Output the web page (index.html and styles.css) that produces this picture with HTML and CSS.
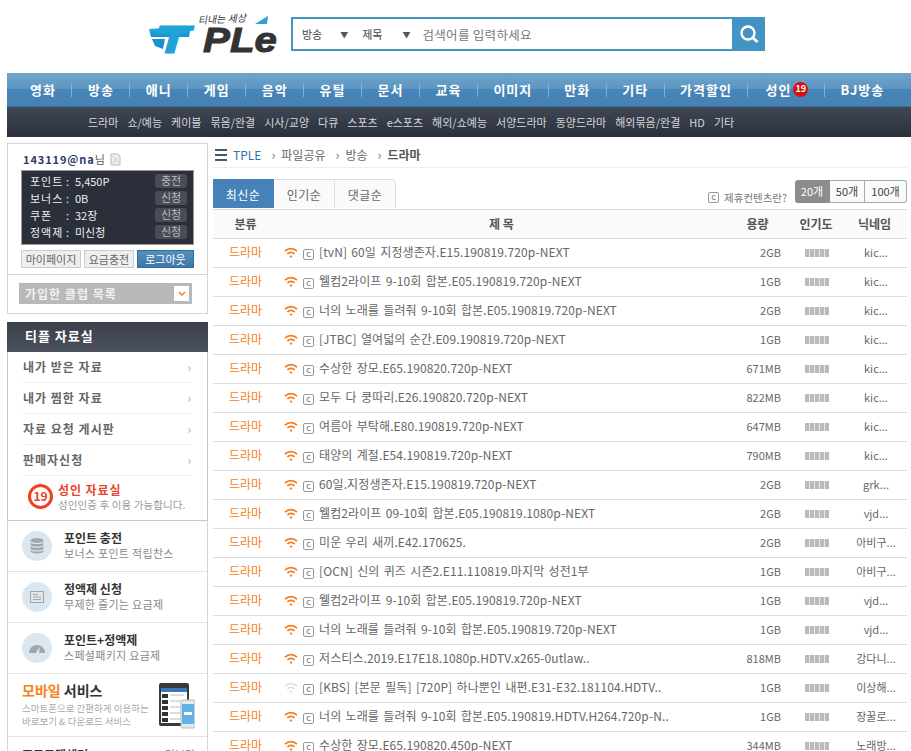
FILE: index.html
```html
<!DOCTYPE html>
<html>
  <head>
    <title>TPLE</title>
    <meta charset="utf-8">
    <link rel="stylesheet" href="styles.css">
  </head>
  <body>
    <svg class="defs" width="0" height="0">
      <symbol id="wifi" viewBox="0 0 14 12">
        <path d="M1 4.2C4.5 .8 9.5 .8 13 4.2" fill="none" stroke="currentColor" stroke-width="1.8"/>
        <path d="M3.4 6.9C5.5 4.9 8.5 4.9 10.6 6.9" fill="none" stroke="currentColor" stroke-width="1.8"/>
        <path d="M5.5 9.2C6.4 8.4 7.600 8.400 8.5 9.2L7 11z" fill="currentColor"/>
      </symbol>
    </svg>

    <header class="top">
      <svg class="logo" width="132" height="42" viewBox="0 0 132 42">
        <defs>
          <linearGradient id="logoBlue" x1="0" y1="0" x2="0" y2="1">
            <stop offset="0" stop-color="#2bb4e4"/>
            <stop offset="1" stop-color="#1593cc"/>
          </linearGradient>
        </defs>
        <text class="logo-tag" x="50" y="9" transform="rotate(-3 50 9)">티내는 세상</text>
        <polygon points="107,9 120,1 119,9" fill="#2f9fd8"/>
        <polygon points="1,14 43,11 41,22 3,22" fill="url(#logoBlue)"/>
        <polygon points="4,24 17,24 15,34 7,31" fill="#1593cc"/>
        <text class="logo-t" transform="translate(7 38) scale(1.5 1)">T</text>
        <text class="logo-ple" transform="translate(55 37) scale(1.12 1)">PLe</text>
      </svg>
      <form class="search">
        <span class="search-sel sel-a">방송</span>
        <span class="search-arrow">▼</span>
        <span class="search-sel sel-b">제목</span>
        <span class="search-arrow arrow-b">▼</span>
        <span class="search-hint">검색어를 입력하세요</span>
        <button type="button" class="search-btn">
          <svg width="20" height="20" viewBox="0 0 20 20">
            <circle cx="9" cy="9" r="6.5" fill="none" stroke="#fff" stroke-width="2.4"/>
            <path d="M13.5 13.5L18.5 18" stroke="#fff" stroke-width="3"/>
          </svg>
        </button>
      </form>
    </header>

    <nav class="main-nav">
      <a class="first">영화</a>
      <a>방송</a>
      <a>애니</a>
      <a>게임</a>
      <a>음악</a>
      <a>유틸</a>
      <a>문서</a>
      <a>교육</a>
      <a>이미지</a>
      <a>만화</a>
      <a>기타</a>
      <a>가격할인</a>
      <a class="adult">성인<span class="badge19">19</span></a>
      <a class="last">BJ방송</a>
    </nav>
    <nav class="sub-nav">
      <a>드라마</a>
      <a>쇼/예능</a>
      <a>케이블</a>
      <a>묶음/완결</a>
      <a>시사/교양</a>
      <a>다큐</a>
      <a>스포츠</a>
      <a>e스포츠</a>
      <a>해외/쇼예능</a>
      <a>서양드라마</a>
      <a>동양드라마</a>
      <a>해외묶음/완결</a>
      <a>HD</a>
      <a>기타</a>
    </nav>

    <div class="page">
      <aside class="side">
        <div class="login-box">
          <div class="user"><b>143119@na</b>님
            <svg width="11" height="13" viewBox="0 0 11 13">
              <path d="M1 1H8L10 3V12H1z" fill="#eee" stroke="#bbb"/>
              <path d="M3 3L8 10M8 4L3 10" stroke="#ccc"/>
            </svg>
          </div>
          <div class="points">
            <div class="point-row"><span class="point-label">포인트</span><span class="point-colon">:</span><span class="point-value">5,450P</span><a class="point-btn">충전</a></div>
            <div class="point-row"><span class="point-label">보너스</span><span class="point-colon">:</span><span class="point-value">0B</span><a class="point-btn">신청</a></div>
            <div class="point-row"><span class="point-label">쿠폰</span><span class="point-colon">:</span><span class="point-value">32장</span><a class="point-btn">신청</a></div>
            <div class="point-row"><span class="point-label">정액제</span><span class="point-colon">:</span><span class="point-value">미신청</span><a class="point-btn">신청</a></div>
          </div>
          <div class="login-btns">
            <a class="login-btn mypage">마이페이지</a>
            <a class="login-btn charge">요금충전</a>
            <a class="login-btn logout">로그아웃</a>
          </div>
        </div>
        <div class="club-box">
          <div class="club-select">가입한 클럽 목록<span class="club-arrow">
            <svg width="8" height="5" viewBox="0 0 8 5"><path d="M1 1L4 4L7 1" fill="none" stroke="#f08a1d" stroke-width="1.5"/></svg>
          </span></div>
        </div>

        <div class="menu-head">티플 자료실</div>
        <div class="menu-box">
          <a class="menu-item">내가 받은 자료<span class="menu-arrow">›</span></a>
          <a class="menu-item">내가 찜한 자료<span class="menu-arrow">›</span></a>
          <a class="menu-item">자료 요청 게시판<span class="menu-arrow">›</span></a>
          <a class="menu-item">판매자신청<span class="menu-arrow">›</span></a>
          <div class="adult-item">
            <span class="adult-mark">19</span>
            <div>
              <div class="adult-title">성인 자료실</div>
              <div class="adult-desc">성인인증 후 이용 가능합니다.</div>
            </div>
          </div>
        </div>

        <div class="service-box">
          <a class="service">
            <span class="service-icon">
              <svg width="14" height="16" viewBox="0 0 14 16" fill="#a3a6a8">
                <ellipse cx="7" cy="2.5" rx="6.5" ry="2.5"/>
                <path d="M.5 4.5C2 6.5 12 6.5 13.5 4.5V7C12 9 2 9 .5 7z"/>
                <path d="M.5 8.2C2 10.2 12 10.2 13.5 8.2V10.7C12 12.7 2 12.7 .5 10.7z"/>
                <path d="M.5 11.9C2 13.9 12 13.9 13.5 11.9V13.5C12 16 2 16 .5 13.5z"/>
              </svg>
            </span>
            <span class="service-text"><b class="service-title">포인트 충전</b><span class="service-desc">보너스 포인트 적립찬스</span></span>
          </a>
          <a class="service">
            <span class="service-icon">
              <svg width="14" height="12" viewBox="0 0 14 12">
                <rect x=".5" y=".5" width="13" height="11" fill="#e3e6e8" stroke="#a3a6a8"/>
                <path d="M3 3.5H8M3 6H11M3 8.5H11" stroke="#a3a6a8"/>
              </svg>
            </span>
            <span class="service-text"><b class="service-title">정액제 신청</b><span class="service-desc">무제한 즐기는 요금제</span></span>
          </a>
          <a class="service">
            <span class="service-icon">
              <svg width="16" height="10" viewBox="0 0 16 10">
                <path d="M0 10A8 8 0 0 1 16 10H10L11 4L7.5 8.5L7 10z" fill="#a3a6a8"/>
              </svg>
            </span>
            <span class="service-text"><b class="service-title">포인트+정액제</b><span class="service-desc">스페셜패키지 요금제</span></span>
          </a>
          <div class="mobile">
            <div>
              <div class="mobile-title"><span class="mobile-orange">모바일</span> 서비스</div>
              <div class="mobile-desc">스마트폰으로 간편하게 이용하는<br>바로보기 &amp; 다운로드 서비스</div>
            </div>
            <svg class="mobile-pic" width="36" height="46" viewBox="0 0 36 46">
              <rect x="0" y="0" width="30" height="43" rx="2" fill="#3a3a3a"/>
              <rect x="2" y="5" width="26" height="35" fill="#fff"/>
              <rect x="2" y="5" width="26" height="4" fill="#3b78b8"/>
              <path d="M3 11h6v4H3zM3 17h6v4H3zM3 23h6v4H3zM3 29h6v4H3zM3 35h6v4H3z" fill="#333"/>
              <path d="M11 12h14M11 18h14M11 24h14M11 30h14M11 36h14" stroke="#bbb"/>
              <rect x="22" y="17" width="14" height="28" rx="2" fill="#e8e8e8" stroke="#bbb"/>
              <rect x="23" y="21" width="12" height="20" fill="#5fb4e4"/>
              <rect x="25" y="29" width="8" height="3" fill="#fff"/>
            </svg>
          </div>
          <div class="more-row"><b>프로그램셀러</b><span>더보기</span></div>
        </div>
      </aside>

      <main class="content">
        <div class="crumbs">
          <span class="crumb-menu"></span>
          <a class="crumb-home">TPLE</a>
          <span class="crumb-sep">›</span><a>파일공유</a>
          <span class="crumb-sep">›</span><a>방송</a>
          <span class="crumb-sep">›</span><b>드라마</b>
        </div>

        <div class="toolbar">
          <div class="tabs">
            <a class="tab tab-on">최신순</a>
            <a class="tab">인기순</a>
            <a class="tab">댓글순</a>
          </div>
          <div class="tool-right">
            <a class="partner"><span class="c-mark">c</span>제휴컨텐츠란?</a>
            <div class="counts">
              <a class="count count-on">20개</a>
              <a class="count">50개</a>
              <a class="count">100개</a>
            </div>
          </div>
        </div>

        <table class="list">
          <thead>
            <tr>
              <th class="col-cat">분류</th>
              <th class="col-title">제 목</th>
              <th class="col-size">용량</th>
              <th class="col-pop">인기도</th>
              <th class="col-nick">닉네임</th>
            </tr>
          </thead>
          <tbody id="rows"></tbody>
        </table>
      </main>
    </div>

    <script>
      const rows = [
        ["[tvN] 60일 지정생존자.E15.190819.720p-NEXT", "2GB", "kic..."],
        ["웰컴2라이프 9-10회 합본.E05.190819.720p-NEXT", "1GB", "kic..."],
        ["너의 노래를 들려줘 9-10회 합본.E05.190819.720p-NEXT", "2GB", "kic..."],
        ["[JTBC] 열여덟의 순간.E09.190819.720p-NEXT", "1GB", "kic..."],
        ["수상한 장모.E65.190820.720p-NEXT", "671MB", "kic..."],
        ["모두 다 쿵따리.E26.190820.720p-NEXT", "822MB", "kic..."],
        ["여름아 부탁해.E80.190819.720p-NEXT", "647MB", "kic..."],
        ["태양의 계절.E54.190819.720p-NEXT", "790MB", "kic..."],
        ["60일.지정생존자.E15.190819.720p-NEXT", "2GB", "grk..."],
        ["웰컴2라이프 09-10회 합본.E05.190819.1080p-NEXT", "2GB", "vjd..."],
        ["미운 우리 새끼.E42.170625.", "2GB", "아비구..."],
        ["[OCN] 신의 퀴즈 시즌2.E11.110819.마지막 성전1부", "1GB", "아비구..."],
        ["웰컴2라이프 9-10회 합본.E05.190819.720p-NEXT", "1GB", "vjd..."],
        ["너의 노래를 들려줘 9-10회 합본.E05.190819.720p-NEXT", "1GB", "vjd..."],
        ["저스티스.2019.E17E18.1080p.HDTV.x265-0utlaw..", "818MB", "강다니..."],
        ["[KBS] [본문 필독] [720P] 하나뿐인 내편.E31-E32.181104.HDTV..", "1GB", "이상해...", true],
        ["너의 노래를 들려줘 9-10회 합본.E05.190819.HDTV.H264.720p-N..", "1GB", "장꿀로..."],
        ["수상한 장모.E65.190820.450p-NEXT", "344MB", "노래방..."]
      ];

      const tbody = document.getElementById("rows");
      rows.forEach(function (row) {
        const tr = document.createElement("tr");
        const wifiClass = row[3] ? "wifi wifi-off" : "wifi";
        tr.innerHTML =
          '<td class="col-cat cat-link">드라마</td>' +
          '<td class="col-title"><svg class="' + wifiClass + '" width="14" height="12"><use href="#wifi"/></svg>' +
          '<span class="c-mark">c</span>' + row[0] + "</td>" +
          '<td class="col-size">' + row[1] + "</td>" +
          '<td class="col-pop"><span class="pop-bar"></span></td>' +
          '<td class="col-nick">' + row[2] + "</td>";
        tbody.appendChild(tr);
      });
    </script>
  </body>
</html>
```

FILE: styles.css
```css
html,
body {
  height: 751px;
  overflow: hidden;
}

body {
  margin: 0;
  background-color: #fff;
  font-family: "Noto Sans CJK KR", "Noto Sans", sans-serif;
  font-size: 12px;
  color: #555;
}

a {
  color: inherit;
  text-decoration: none;
}

.defs {
  display: block;
  height: 0;
}

/* top */
.top {
  height: 73px;
  display: flex;
  padding: 15px 0 0 148px;
  box-sizing: border-box;
}

.logo {
  flex: none;
  overflow: visible;
}

.logo-tag {
  font-size: 10px;
  font-style: italic;
  fill: #333;
}

.logo-t {
  font-family: "Liberation Sans", sans-serif;
  font-size: 38px;
  font-weight: bold;
  font-style: italic;
  fill: #1ea2d8;
  stroke: #1ea2d8;
  stroke-width: 1px;
}

.logo-ple {
  font-family: "Liberation Sans", sans-serif;
  font-size: 36px;
  font-weight: bold;
  font-style: italic;
  fill: #333;
  stroke: #333;
  stroke-width: 1px;
}

.search {
  margin: 2px 0 0 11px;
  width: 474px;
  height: 34px;
  box-sizing: border-box;
  border: 2px solid #4393c3;
  display: flex;
  align-items: center;
  position: relative;
  color: #444;
  font-size: 11px;
}

.sel-a {
  margin-left: 9px;
}

.sel-b {
  margin-left: 14px;
}

.search-arrow {
  font-size: 8px;
  color: #555;
  margin-left: 18px;
}

.arrow-b {
  margin-left: 20px;
}

.search-hint {
  margin-left: 12px;
  font-size: 12.5px;
  letter-spacing: .3px;
  color: #777;
}

.search-btn {
  position: absolute;
  right: -2px;
  top: -2px;
  width: 33px;
  height: 34px;
  padding: 0;
  border: none;
  background-color: #4393c3;
  display: flex;
  align-items: center;
  justify-content: center;
}

/* nav */
.main-nav {
  margin-left: 7px;
  height: 34px;
  display: flex;
  align-items: center;
  box-sizing: border-box;
  border-bottom: 1px solid #2f6f9f;
  background: linear-gradient(#6fa5ca 0, #5c95c0 50%, #4784b7 50%, #4682b4 100%);
}

.main-nav a {
  padding: 0 15.5px;
  height: 14px;
  line-height: 14px;
  display: flex;
  align-items: center;
  border-right: 1px solid #86b0cf;
  font-size: 13px;
  font-weight: bold;
  letter-spacing: 1px;
  color: #fff;
}

.main-nav .first {
  padding-left: 23px;
}

.main-nav .adult {
  padding: 0 16px 0 17px;
}

.main-nav .last {
  border-right: none;
  padding-left: 15px;
}

.badge19 {
  width: 15px;
  height: 15px;
  margin-left: 2px;
  border-radius: 50%;
  background-color: #d90f0f;
  font-size: 9px;
  letter-spacing: 0;
  text-align: center;
}

.sub-nav {
  margin-left: 7px;
  height: 30px;
  padding-left: 81px;
  display: flex;
  align-items: center;
  gap: 9px;
  background: linear-gradient(#404755, #2a2f3a);
  font-size: 11px;
  color: #d5d7da;
}

/* layout */
.page {
  display: flex;
  padding: 6px 4px 0 7px;
}

.side {
  width: 201px;
  flex: none;
}

.content {
  width: 694px;
  margin-left: 5px;
}

/* login */
.login-box {
  height: 132px;
  box-sizing: border-box;
  border: 1px solid #d5d5d5;
  padding: 0 13px;
}

.user {
  height: 26px;
  box-sizing: border-box;
  display: flex;
  align-items: center;
  padding: 4px 2px 0;
  font-size: 11px;
  color: #555;
}

.user b {
  color: #2b3a67;
  letter-spacing: .9px;
}

.user svg {
  margin-left: 5px;
}

.points {
  height: 75px;
  box-sizing: border-box;
  border: 1px solid #999;
  background-color: #2a2f3a;
  padding: 1px 6px 0 8px;
  color: #eee;
  font-size: 11px;
}

.point-row {
  height: 17px;
  display: flex;
  align-items: center;
}

.point-label {
  width: 36px;
  letter-spacing: 1px;
}

.point-colon {
  width: 9px;
}

.point-value {
  flex: 1;
}

.point-btn {
  width: 32px;
  height: 14px;
  line-height: 13px;
  border-radius: 3px;
  background-color: #474c57;
  color: #bbb;
  text-align: center;
}

.login-btns {
  display: flex;
  gap: 3px;
  margin-top: 5px;
  font-size: 11px;
}

.login-btn {
  height: 18px;
  line-height: 16px;
  box-sizing: border-box;
  border: 1px solid #ccc;
  background-color: #eee;
  color: #666;
  text-align: center;
}

.mypage {
  width: 60px;
}

.charge {
  width: 50px;
}

.logout {
  width: 57px;
  border-color: #2f6f9f;
  background: linear-gradient(#5590bd, #3f78a8);
  color: #fff;
}

.club-box {
  height: 39px;
  box-sizing: border-box;
  padding: 8px 15px 0 11px;
  border: 1px solid #d5d5d5;
  border-top: none;
}

.club-select {
  height: 21px;
  display: flex;
  align-items: center;
  justify-content: space-between;
  padding: 0 3px 0 6px;
  background-color: #b9b9b9;
  font-weight: bold;
  font-size: 12px;
  color: #f0f0f0;
  letter-spacing: 1px;
}

.club-arrow {
  width: 15px;
  height: 15px;
  display: flex;
  align-items: center;
  justify-content: center;
  background-color: #fff;
}

/* side menu */
.menu-head {
  margin-top: 8px;
  height: 30px;
  line-height: 28px;
  padding-left: 18px;
  background: linear-gradient(#3a404c, #4b515c);
  color: #fff;
  font-size: 13px;
  font-weight: bold;
  letter-spacing: 1px;
}

.menu-box {
  border: 1px solid #c8c8c8;
  border-top: none;
  padding: 0 15px;
}

.menu-item {
  height: 31px;
  box-sizing: border-box;
  display: flex;
  align-items: center;
  justify-content: space-between;
  padding-bottom: 2px;
  border-bottom: 1px solid #eee;
  font-size: 12px;
  font-weight: bold;
  color: #666;
  letter-spacing: 1px;
}

.menu-arrow {
  font-weight: normal;
  font-size: 12px;
  color: #aaa;
}

.adult-item {
  height: 44px;
  box-sizing: border-box;
  display: flex;
  gap: 5px;
  padding: 8px 0 0 5px;
}

.adult-mark {
  width: 25px;
  height: 25px;
  flex: none;
  box-sizing: border-box;
  border: 3px solid #f0401f;
  border-radius: 50%;
  color: #f0401f;
  font-size: 12px;
  font-weight: bold;
  line-height: 18px;
  text-align: center;
}

.adult-title {
  color: #e8452c;
  font-size: 12px;
  font-weight: bold;
  line-height: 15px;
  letter-spacing: .9px;
  margin-top: -2px;
}

.adult-desc {
  font-size: 10.5px;
  line-height: 15px;
  letter-spacing: .1px;
  color: #999;
  white-space: nowrap;
}

/* service links */
.service-box {
  border: 1px solid #d5d5d5;
  border-top: none;
}

.service {
  height: 51px;
  box-sizing: border-box;
  display: flex;
  align-items: center;
  gap: 12px;
  padding: 0 0 0 14px;
  border-bottom: 1px solid #e2e2e2;
}

.service-icon {
  width: 30px;
  height: 30px;
  flex: none;
  border-radius: 50%;
  background-color: #dae6f0;
  display: flex;
  align-items: center;
  justify-content: center;
}

.service-text {
  margin-top: -3px;
}

.service-title {
  display: block;
  font-size: 12px;
  line-height: 17px;
  color: #333;
}

.service-desc {
  display: block;
  font-size: 11px;
  line-height: 15px;
  color: #888;
  letter-spacing: .3px;
}

.mobile {
  height: 63px;
  box-sizing: border-box;
  display: flex;
  justify-content: space-between;
  padding: 6px 12px 0 14px;
  border-bottom: 1px solid #e2e2e2;
}

.mobile-title {
  font-size: 14px;
  line-height: 20px;
  font-weight: bold;
  color: #333;
}

.mobile-orange {
  color: #f58220;
}

.mobile-desc {
  margin-top: 2px;
  font-size: 9.5px;
  line-height: 13px;
  color: #aaa;
  white-space: nowrap;
}

.mobile-pic {
  flex: none;
  margin-top: 3px;
}

.more-row {
  display: flex;
  justify-content: space-between;
  padding: 9px 12px 0 14px;
  font-size: 12px;
  color: #333;
}

.more-row span {
  font-size: 11px;
  color: #777;
}

/* breadcrumb */
.crumbs {
  height: 25px;
  box-sizing: border-box;
  display: flex;
  align-items: center;
  padding: 0 0 1px 2px;
  border-bottom: 1px solid #eee;
  color: #666;
  font-size: 12px;
}

.crumbs b {
  color: #555;
}

.crumb-menu {
  width: 12px;
  height: 12px;
  margin-right: 6px;
  background-image: repeating-linear-gradient(#46586b 0, #46586b 2px, #fff 2px, #fff 5px);
}

.crumb-home {
  color: #2e75ad;
}

.crumb-sep {
  margin: 0 6px 0 10px;
  font-size: 13px;
  color: #6a8297;
  line-height: 14px;
}

/* tabs */
.toolbar {
  margin-top: 11px;
  height: 30px;
  box-sizing: border-box;
  display: flex;
  justify-content: space-between;
}

.tabs {
  display: flex;
}

.tab {
  width: 61px;
  height: 29px;
  line-height: 30px;
  box-sizing: border-box;
  border: 1px solid #ddd;
  border-left: none;
  border-bottom: none;
  background-color: #fafafa;
  text-align: center;
  letter-spacing: .5px;
  color: #666;
}

.tab:last-child {
  border-top-right-radius: 5px;
}

.tab-on {
  background-color: #4682b8;
  border-color: #4682b8;
  color: #fff;
}

.tool-right {
  display: flex;
  align-items: flex-start;
  gap: 8px;
}

.partner {
  margin-top: 11px;
  font-size: 10.5px;
  line-height: 15px;
  color: #777;
  display: flex;
  align-items: center;
}

.c-mark {
  display: inline-block;
  width: 11px;
  height: 11px;
  line-height: 8px;
  box-sizing: border-box;
  border: 1px solid #999;
  border-radius: 2px;
  margin-right: 5px;
  font-size: 9px;
  text-align: center;
  color: #777;
}

.counts {
  margin-top: 1px;
  display: flex;
  font-size: 11px;
}

.count {
  width: 35px;
  height: 23px;
  line-height: 21px;
  box-sizing: border-box;
  border: 1px solid #aaa;
  border-left: none;
  background-color: #fafafa;
  color: #444;
  text-align: center;
}

.count:last-child {
  width: 42px;
  border-radius: 0 3px 3px 0;
}

.count-on {
  background-color: #8c8c8c;
  border-color: #8c8c8c;
  border-radius: 3px 0 0 3px;
  color: #fff;
}

/* list */
.list {
  width: 694px;
  table-layout: fixed;
  border-collapse: collapse;
  border-top: 1px solid #ddd;
}

.list th {
  height: 29px;
  padding: 0 0 1px;
  box-sizing: border-box;
  background-color: #fafafa;
  border-bottom: 1px solid #ddd;
  font-size: 12px;
  font-weight: bold;
  color: #555;
  text-align: center;
}

.list td {
  height: 29px;
  padding: 0 0 3px;
  box-sizing: border-box;
  border-bottom: 1px solid #ddd;
  font-size: 12px;
  color: #666;
  text-align: center;
  white-space: nowrap;
  overflow: hidden;
}

.col-cat {
  width: 65px;
}

.list .col-title {
  width: 447px;
}

.list td.col-title {
  padding-left: 6px;
  text-align: left;
  font-size: 12px;
  letter-spacing: .1px;
  word-spacing: 1.5px;
}

.col-size {
  width: 65px;
}

.list td.col-size {
  padding-right: 9px;
  text-align: right;
  font-size: 11px;
}

.col-pop {
  width: 52px;
}

.list td.col-nick {
  padding-left: 3px;
  font-size: 11px;
}

.list td.cat-link {
  color: #f58220;
}

.wifi {
  margin-right: 5px;
  vertical-align: -2px;
  color: #f47b20;
}

.wifi-off {
  color: #ddd;
}

.pop-bar {
  display: block;
  width: 24px;
  height: 8px;
  margin: 3px auto 0 15px;
  background-image: repeating-linear-gradient(90deg, #bbb 0, #bbb 4px, #e8e8e8 4px, #e8e8e8 5px);
}
```
